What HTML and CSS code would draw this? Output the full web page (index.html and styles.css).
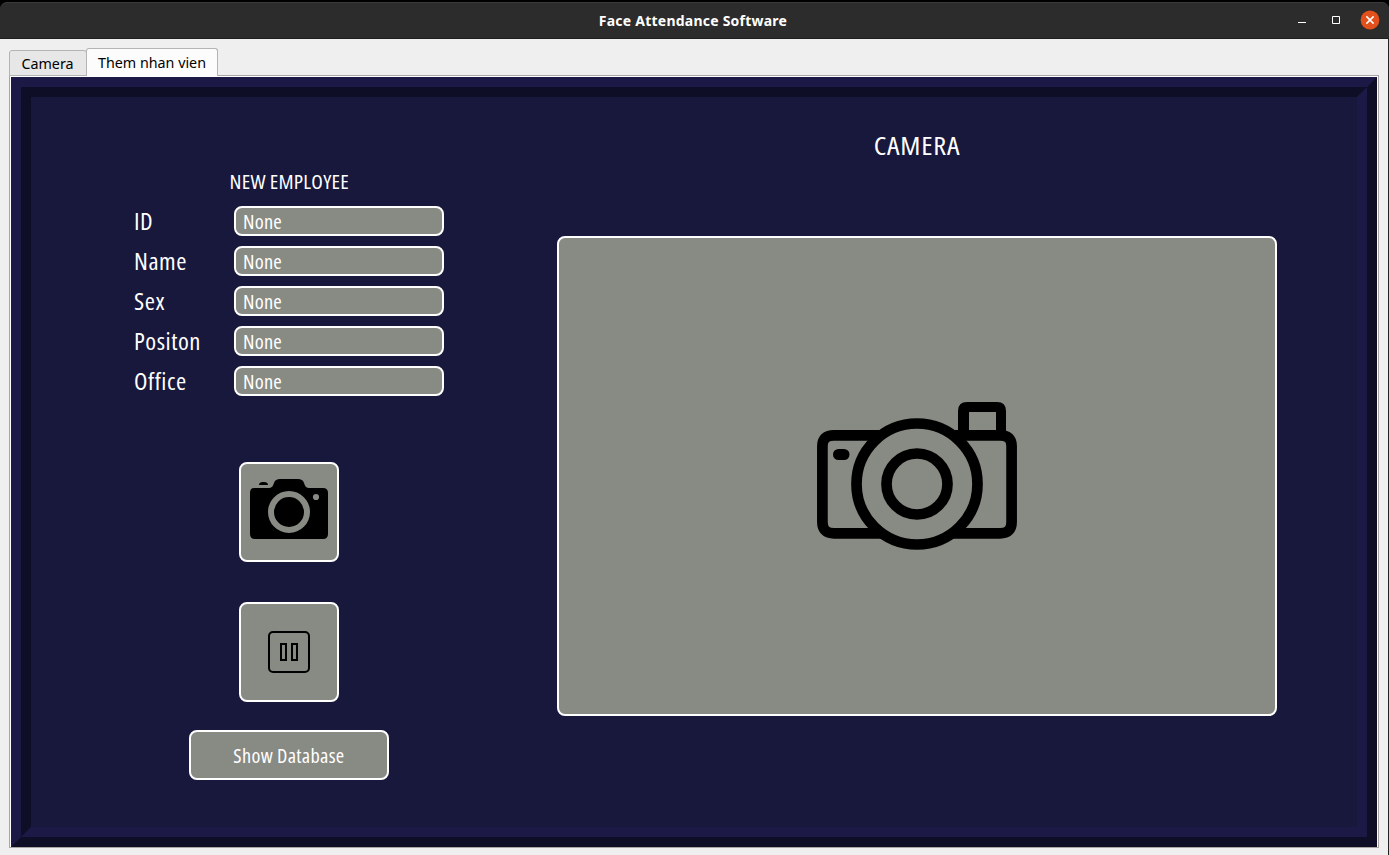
FILE: index.html
```html
<!DOCTYPE html>
<html lang="en">
<head>
<meta charset="utf-8">
<title>Face Attendance Software</title>
<link rel="stylesheet" href="styles.css">
</head>
<body>
<div class="window">
  <header class="titlebar">
    <h1 class="title">Face Attendance Software</h1>
    <div class="controls">
      <svg width="8" height="10" viewBox="0 0 8 10"><path d="M0 7h8v1H0z" fill="#fff"/></svg>
      <svg width="8" height="8" viewBox="0 0 8 8"><path d="M.5.5h7v7h-7z" fill="none" stroke="#fff"/></svg>
      <svg width="20" height="20" viewBox="0 0 20 20"><circle cx="10" cy="10" r="9.4" fill="#e2501b"/><path d="M6.4 6.4l7.2 7.2M13.6 6.4l-7.2 7.2" stroke="#fff" stroke-width="1.5"/></svg>
    </div>
  </header>
  <main class="body">
    <nav class="tabs">
      <div class="tab">Camera</div>
      <div class="tab active">Them nhan vien</div>
    </nav>
    <div class="pane">
      <div class="bevel-outer">
        <div class="bevel-inner">
          <section class="form">
            <h2 class="form-title">NEW EMPLOYEE</h2>
            <div class="row"><span class="label">ID</span><div class="field"><span class="value">None</span></div></div>
            <div class="row"><span class="label">Name</span><div class="field"><span class="value">None</span></div></div>
            <div class="row"><span class="label">Sex</span><div class="field"><span class="value">None</span></div></div>
            <div class="row"><span class="label">Positon</span><div class="field"><span class="value">None</span></div></div>
            <div class="row"><span class="label">Office</span><div class="field"><span class="value">None</span></div></div>
            <div class="btn square capture">
              <svg width="96" height="96" viewBox="0 0 96 96">
                <path d="M13 24h14c4 0 5-2 6-5 1-3 3-4 6-4h18c3 0 5 1 6 4 1 3 2 5 6 5h13q5 0 5 5v41q0 5-5 5H14q-5 0-5-5V29q0-5 4-5zM18 21q0-3 4-3h1q4 0 4 3z"/>
                <circle cx="48" cy="48" r="18" fill="none" stroke="#888a84" stroke-width="6"/>
                <circle cx="75" cy="33" r="3.1" fill="#888a84"/>
              </svg>
            </div>
            <div class="btn square pause">
              <svg width="42" height="42" viewBox="0 0 42 42" fill="none" stroke="#000" stroke-width="2"><rect x="1" y="1" width="40" height="40" rx="4"/><path d="M13 13h5v16h-5zM24 13h5v16h-5z"/></svg>
            </div>
            <div class="btn database"><span class="caption">Show Database</span></div>
          </section>
          <section class="preview">
            <h2 class="preview-title">CAMERA</h2>
            <div class="screen">
              <svg width="200" height="148" viewBox="0 0 200 148" fill="none" stroke="#000" stroke-width="10.7">
                <path d="M62 33.3H17Q5.4 33.3 5.4 44v76q0 11.3 11.6 11.3h47M138 33.3h45q11.6 0 11.6 10.7v76q0 11.3-11.6 11.3h-47"/>
                <path d="M141 34V9q0-9 9-9h30q9 0 9 9v25h-10V10h-27v24z" fill="#000" stroke="none"/>
                <circle cx="100" cy="82" r="60.5"/>
                <circle cx="100" cy="82" r="30.5"/>
                <rect x="16" y="47" width="16.5" height="11" rx="5.5" fill="#000" stroke="none"/>
              </svg>
            </div>
          </section>
        </div>
      </div>
    </div>
  </main>
</div>
</body>
</html>
```
FILE: styles.css
```css
* { box-sizing: border-box; }
body { margin: 0; background: #000; font-family: "Noto Sans", "Open Sans", sans-serif; }
h1, h2 { margin: 0; font-weight: 400; }
svg { display: block; flex: none; }
.window { width: 1389px; height: 855px; padding-top: 2px; display: flex; flex-direction: column; }
.titlebar { height: 37px; flex: none; display: grid; grid-template-columns: 1fr auto 1fr; align-items: center; padding: 0 9px 0 6px; background: #2c2c2c; border-top: 1px solid #3a3a3a; border-bottom: 1px solid #211e1f; border-radius: 7px 7px 0 0; }
.title { grid-column: 2; font: 700 14px/20px "Noto Sans", sans-serif; letter-spacing: 0.23px; color: #fff; white-space: nowrap; }
.controls { justify-self: end; display: flex; align-items: center; gap: 26px; padding-bottom: 2px; }
.controls svg:last-child { margin-left: -6px; }
.body { flex: 1; padding: 9px 9px 7px; background: #efefef; border-right: 1px solid #222; display: flex; flex-direction: column; }
.tabs { height: 28px; flex: none; display: flex; align-items: flex-end; margin-bottom: -1px; position: relative; }
.tab { width: 78px; height: 26px; padding: 1px 1px 0 0; background: #e7e7e7; border: 1px solid #b4b4b4; border-radius: 3px 3px 0 0; font-size: 14.3px; line-height: 24px; text-align: center; color: #000; white-space: nowrap; }
.tab.active { width: 132px; height: 28px; margin-left: -1px; padding-right: 0; background: #fcfcfc; border-bottom: 0; line-height: 26px; }
.pane { flex: 1; border: 1px solid #aaa6a6; padding: 1px 1px 0; background: #fff; display: flex; }
.bevel-outer { flex: 1; display: flex; border: 10px solid; border-color: #1c1946 #0f0e27 #0f0e27 #1c1946; }
.bevel-inner { flex: 1; display: flex; gap: 113px; padding-left: 103px; border: 10px solid; border-color: #0f0e27 #1c1946 #1c1946 #0f0e27; background: #18183c; color: #fff; font-family: "Open Sans", sans-serif; font-stretch: 75%; }
.form { width: 310px; padding-top: 70px; display: flex; flex-direction: column; align-items: center; }
.form-title { height: 39px; font-size: 19.3px; line-height: 29px; letter-spacing: 0.2px; white-space: nowrap; transform: scaleX(1.1); }
.row { width: 310px; height: 30px; margin-bottom: 10px; display: flex; align-items: center; }
.label { width: 100px; font-size: 23.5px; line-height: 30px; letter-spacing: 0.5px; white-space: nowrap; transform: scaleX(1.05); transform-origin: left; }
.field { width: 210px; height: 30px; padding-left: 7px; background: #888a84; border: 2px solid #fff; border-radius: 8px; font-size: 19.3px; line-height: 27px; letter-spacing: 0.2px; }
.value { display: block; transform: scaleX(1.06); transform-origin: left; }
.btn { flex: none; display: flex; align-items: center; justify-content: center; background: #888a84; border: 2px solid #fff; border-radius: 8px; }
.square { width: 100px; height: 100px; }
.capture { margin-top: 56px; }
.pause { margin-top: 40px; }
.database { width: 200px; height: 50px; margin-top: 28px; font-size: 19.3px; letter-spacing: 0.3px; white-space: nowrap; }
.caption { transform: scaleX(1.05); }
.preview { width: 720px; padding-top: 28px; }
.preview-title { height: 111px; text-align: center; font-size: 26px; line-height: 40px; letter-spacing: 0.7px; transform: scaleX(1.09); }
.screen { height: 480px; display: flex; align-items: center; justify-content: center; background: #888a84; border: 2px solid #fff; border-radius: 8px; }
```
